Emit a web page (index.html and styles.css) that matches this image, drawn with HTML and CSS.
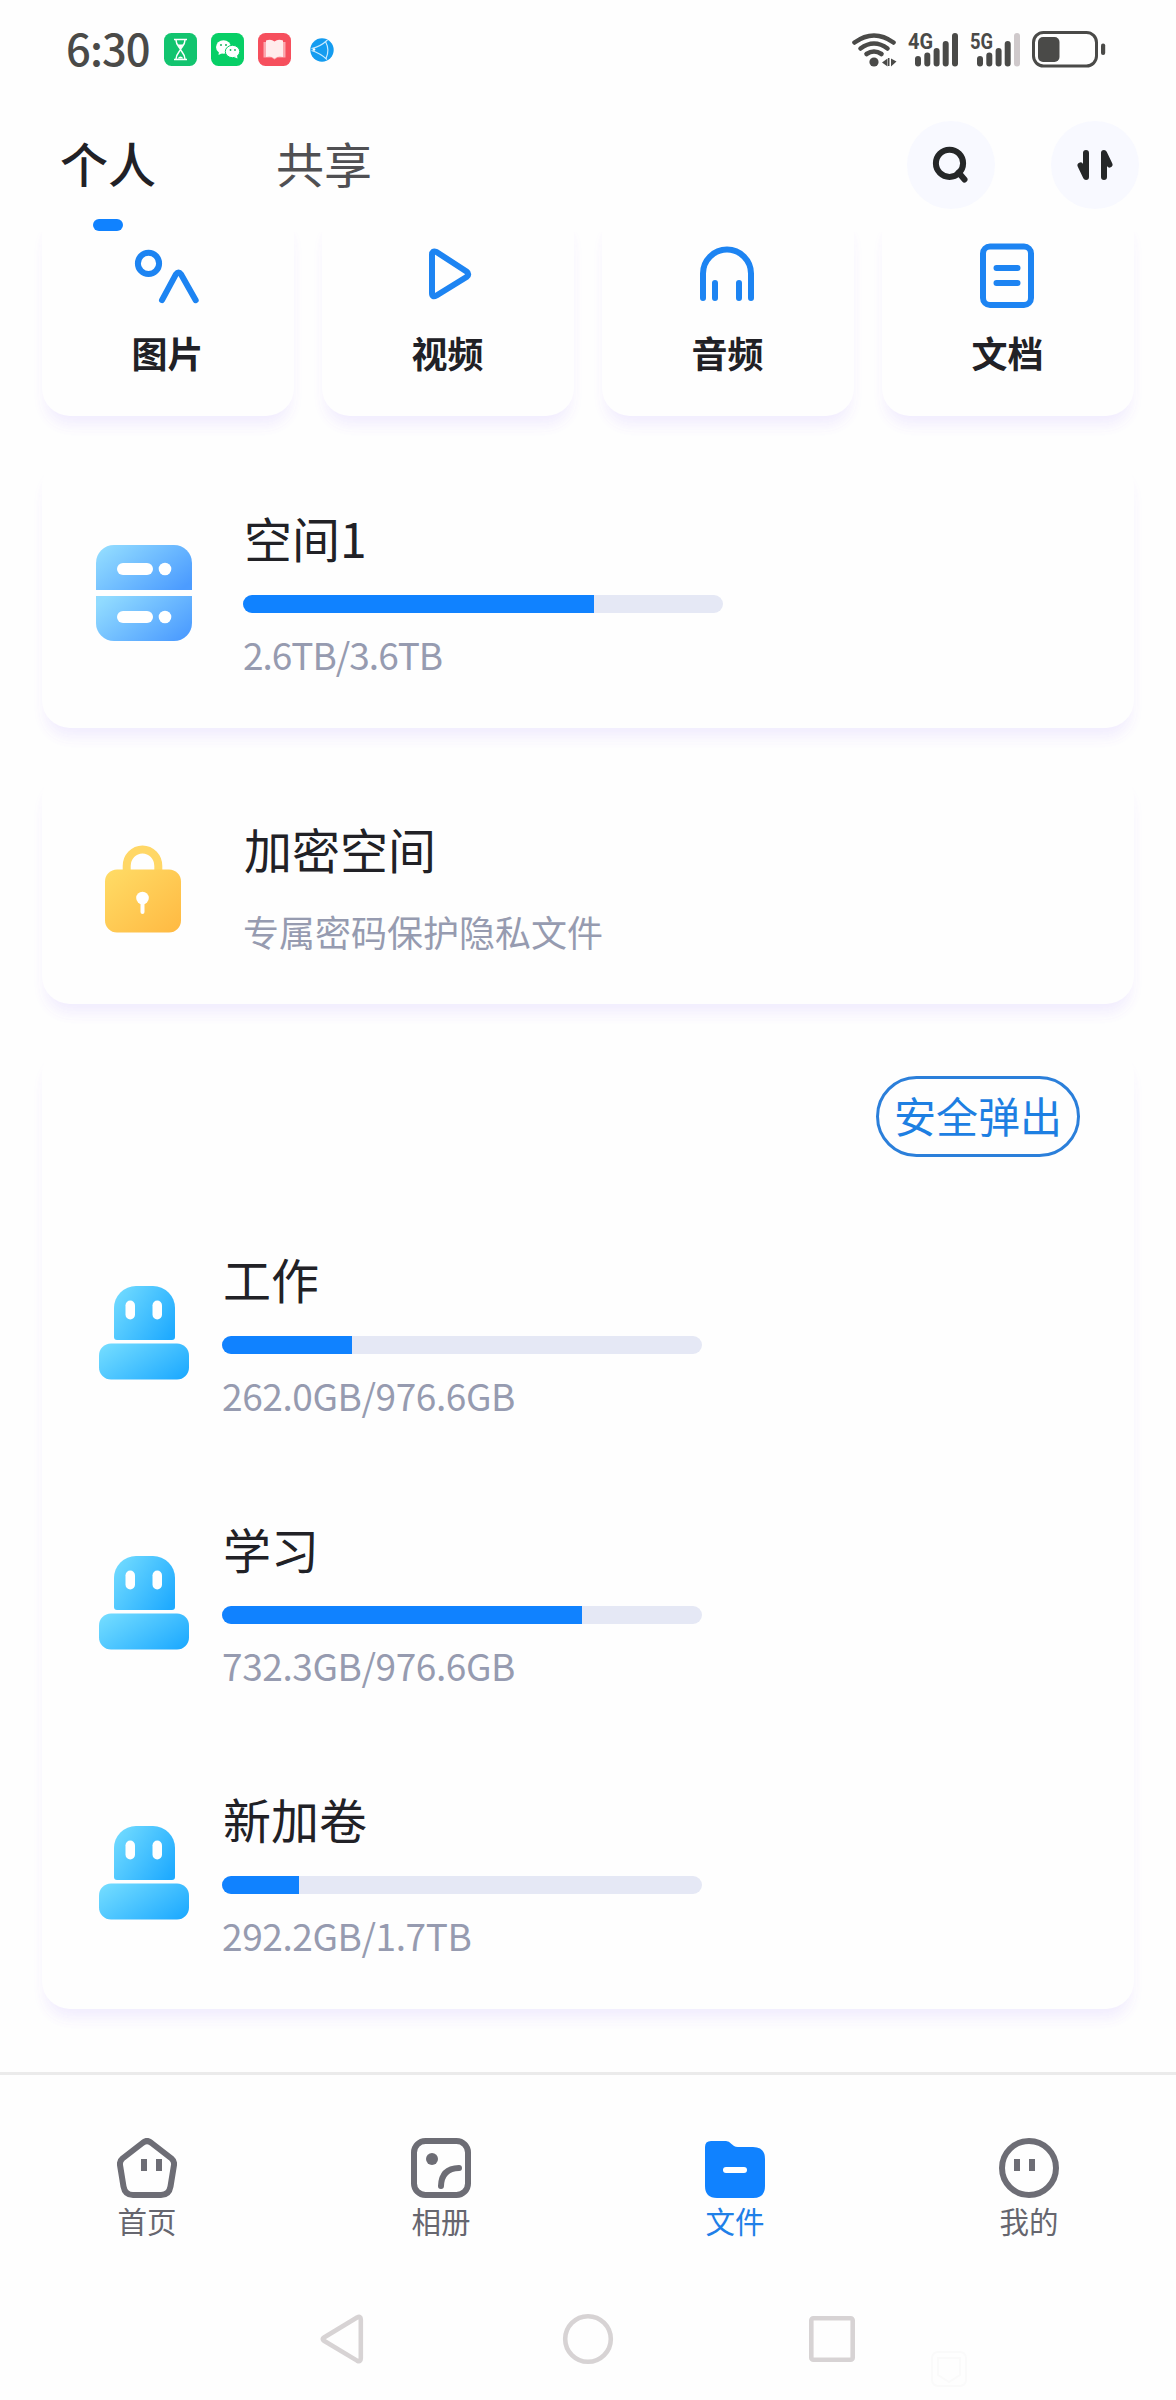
FILE: index.html
```html
<!DOCTYPE html>
<html lang="zh-CN">
<head>
<meta charset="utf-8">
<title>文件</title>
<link rel="stylesheet" href="styles.css">
</head>
<body>
<svg class="defs" width="0" height="0" aria-hidden="true">
  <defs>
    <linearGradient id="g-server" x1="0" y1="0.2" x2="1" y2="0.8">
      <stop offset="0" stop-color="#91dbff"/><stop offset="1" stop-color="#4c9cff"/>
    </linearGradient>
    <linearGradient id="g-lock" x1="0" y1="0" x2="1" y2="1">
      <stop offset="0" stop-color="#ffdc66"/><stop offset="1" stop-color="#ffb942"/>
    </linearGradient>
    <linearGradient id="g-disk" x1="0" y1="0.2" x2="1" y2="0.8">
      <stop offset="0" stop-color="#70daff"/><stop offset="1" stop-color="#20abff"/>
    </linearGradient>
    <symbol id="disk" viewBox="0 0 90 94">
      <path fill="url(#g-disk)" d="M15 51V22A22 22 0 0 1 37 0H54A22 22 0 0 1 76 22V51Q76 54 73 54H18Q15 54 15 51Z"/>
      <rect fill="url(#g-disk)" y="57.500" width="90" height="36" rx="12"/>
      <rect fill="#fff" x="26.500" y="14.500" width="9.500" height="19" rx="4.750"/>
      <rect fill="#fff" x="53.500" y="14.500" width="9.500" height="19" rx="4.750"/>
    </symbol>
  </defs>
</svg>
<div class="screen">
  <header class="status">
    <div class="status-left">
      <span class="clock">6:30</span>
      <svg width="33" height="33" viewBox="0 0 33 33"><rect width="33" height="33" rx="7.500" fill="#12c46f"/><path d="M10 6.500h13M10 26.500h13M12 7c0 5 3.500 7 4.500 9.500C15.500 19 12 21 12 26M21 7c0 5-3.500 7-4.500 9.500C17.500 19 21 21 21 26" fill="none" stroke="#fff" stroke-width="1.500"/><path d="M13.500 11.500h6l-3 4zM13.500 25.500q3-4 6 0z" fill="#fff"/></svg>
      <svg width="33" height="33" viewBox="0 0 33 33"><rect width="33" height="33" rx="7.500" fill="#07cf66"/><path d="M8 18l-.5 4 4-2z" fill="#fff"/><ellipse cx="12.500" cy="14" rx="7.500" ry="6.700" fill="#fff"/><ellipse cx="21.500" cy="18.500" rx="7.200" ry="6.200" fill="#fff" stroke="#07cf66"/><path d="M23 24l3.500 1.500-.5-3z" fill="#fff"/><g fill="#14b55c"><circle cx="10" cy="12" r="1"/><circle cx="15" cy="12" r="1"/><circle cx="19.500" cy="17" r=".9"/><circle cx="24" cy="17" r=".9"/></g></svg>
      <svg width="33" height="33" viewBox="0 0 33 33"><rect width="33" height="33" rx="7.500" fill="#f64f5d"/><path d="M5.500 9v15.500h8l3 2 3-2h8V9z" fill="#fca8ae"/><path d="M8 7.500q5-2 8.500 1 3.500-3 8.500-1v16.500q-5-1.500-8.500 1.500Q13 22.500 8 24z" fill="#ffecec"/></svg>
      <svg class="globe" width="24" height="24" viewBox="0 0 24 24"><circle cx="12" cy="12" r="11.700" fill="#149cf0"/><path d="M1.500 10.500Q10 9 17.500 2M1.500 12.500Q10 15 17 21.500M15.500 3.500Q20 12 16 20.500" fill="none" stroke="#c8eaff" stroke-width="1.200"/><circle cx="4" cy="11.500" r="1.300" fill="#fff"/></svg>
    </div>
    <svg class="status-right" width="256" height="42" viewBox="850 28 256 42">
      <g fill="none" stroke="#4a4a48" stroke-width="4.600" stroke-linecap="round"><path d="M854.500 42.500Q874 28.500 893.500 42.500"/><path d="M860.500 48.500Q874 38.500 887.500 48.500"/><path d="M866.500 54Q874 49 881.500 54"/></g>
      <g fill="#4a4a48"><circle cx="874" cy="62" r="4.600"/><path d="M882 62.500l5.500-4v8zM891 58.500l5.500 3-5.500 5z"/><path d="M888 58h1.500v8H888z"/></g>
      <g class="net"><text x="908" y="49" textLength="25" lengthAdjust="spacingAndGlyphs">4G</text><text x="970" y="49" textLength="23" lengthAdjust="spacingAndGlyphs">5G</text></g>
      <g stroke="#4a4a48" stroke-width="6" stroke-linecap="round">
        <path d="M918 59v4.500M927.300 55.500v8M936.600 51v12.500M945.700 44v19.500M955 36v27.500M980 59v4.500M989.300 55.500v8M998.600 51v12.500M1007.700 44v19.500"/>
        <path stroke="#cfc9cb" d="M1017 36v27.500"/>
      </g>
      <rect x="1033.500" y="32.500" width="63" height="33.500" rx="10" fill="none" stroke="#4a4a48" stroke-width="3"/>
      <rect x="1038" y="37" width="21.500" height="25" rx="5" fill="#4a4a48"/><rect x="1101" y="43.500" width="4.200" height="11.500" rx="2" fill="#4a4a48"/>
    </svg>
  </header>

  <nav class="tabs">
    <a class="tab active">个人</a>
    <a class="tab">共享</a>
    <span class="round"><svg width="88" height="88" viewBox="907 121 88 88"><circle cx="949.500" cy="163.300" r="13.600" fill="none" stroke="#252728" stroke-width="6"/><path d="M958.500 172.500l6 7" stroke="#252728" stroke-width="6" stroke-linecap="round"/></svg></span>
    <span class="round"><svg width="88" height="88" viewBox="1051 121 88 88"><path d="M1086 153v24l-5.500-11.500M1104 177v-24l5.500 11.500" fill="none" stroke="#252728" stroke-width="6" stroke-linecap="round" stroke-linejoin="round"/></svg></span>
  </nav>

  <main class="content">
    <section class="cats">
      <div class="card cat">
        <svg width="72" height="72" viewBox="132 240 72 72"><circle cx="148.500" cy="263.400" r="10.600"/><path d="M162 300.200l14-26q2.500-3.500 5 0l14.700 26"/></svg>
        <span>图片</span>
      </div>
      <div class="card cat">
        <svg width="72" height="72" viewBox="412 240 72 72"><path d="M432 255v38q0 5 4.500 2.500l30-18.500q3.500-3 0-5.500l-30-19.500q-4.500-2-4.500 3z"/></svg>
        <span>视频</span>
      </div>
      <div class="card cat">
        <svg width="72" height="72" viewBox="692 240 72 72"><path d="M703 298v-24.500a24 24 0 0 1 48 0V298M715 283v15M739 283v15"/></svg>
        <span>音频</span>
      </div>
      <div class="card cat">
        <svg width="72" height="72" viewBox="972 240 72 72"><rect x="983" y="246.500" width="48" height="58.500" rx="7"/><path d="M996.500 268h21M996.500 283h21"/></svg>
        <span>文档</span>
      </div>
    </section>

    <section class="card space">
      <svg width="96" height="96" viewBox="0 0 96 96"><path fill="url(#g-server)" d="M0 45V18A18 18 0 0 1 18 0H78A18 18 0 0 1 96 18V45Z"/><path fill="url(#g-server)" d="M0 51H96V78A18 18 0 0 1 78 96H18A18 18 0 0 1 0 78Z"/><g fill="#fff"><rect x="21" y="18" width="36" height="12" rx="6"/><circle cx="69" cy="24" r="6.300"/><rect x="21" y="66" width="36" height="12" rx="6"/><circle cx="69" cy="72" r="6.300"/></g></svg>
      <div class="info">
        <h2>空间1</h2>
        <div class="bar"><i style="width:73.1%"></i></div>
        <p class="size tight">2.6TB/3.6TB</p>
      </div>
    </section>

    <section class="card vault">
      <svg width="96" height="96" viewBox="96 841 96 96"><path d="M126.700 875v-9a15.800 16.500 0 0 1 31.600 0v9" fill="none" stroke="#ffd766" stroke-width="8"/><rect x="105" y="869.500" width="76" height="63" rx="12" fill="url(#g-lock)"/><circle cx="142.500" cy="898" r="6.300" fill="#fff"/><path d="M142.500 900v12" stroke="#fff" stroke-width="4" stroke-linecap="round"/></svg>
      <div class="info">
        <h2>加密空间</h2>
        <p class="desc">专属密码保护隐私文件</p>
      </div>
    </section>

    <section class="card disks">
      <button class="eject">安全弹出</button>
      <div class="disk">
        <svg width="90" height="94"><use href="#disk"/></svg>
        <div class="info"><h2>工作</h2><div class="bar"><i style="width:27%"></i></div><p class="size">262.0GB/976.6GB</p></div>
      </div>
      <div class="disk">
        <svg width="90" height="94"><use href="#disk"/></svg>
        <div class="info"><h2>学习</h2><div class="bar"><i style="width:75%"></i></div><p class="size">732.3GB/976.6GB</p></div>
      </div>
      <div class="disk">
        <svg width="90" height="94"><use href="#disk"/></svg>
        <div class="info"><h2>新加卷</h2><div class="bar"><i style="width:16%"></i></div><p class="size">292.2GB/1.7TB</p></div>
      </div>
    </section>
  </main>

  <nav class="dock">
    <a><svg width="60" height="60" viewBox="0 0 60 60"><path d="M25.500 5Q30 1 34.500 5L54.500 20.500Q57.500 23 57 27L53.500 48.500Q52 57 44 57H16Q8 57 6.500 48.500L3 27Q2.500 23 5.500 20.500Z" class="line"/><path d="M24 21h6v12h-6zM39 21h6v12h-6z" fill="#6d6d75"/></svg>首页</a>
    <a><svg width="60" height="60" viewBox="0 0 60 60"><rect x="3" y="3" width="54" height="54" rx="11.500" class="line"/><circle cx="21" cy="21" r="6" fill="#6d6d75"/><path d="M30 48Q30.500 30.500 48 30" class="line"/></svg>相册</a>
    <a class="on"><svg width="60" height="60" viewBox="0 0 60 60"><path d="M0 9Q0 3 6 3H21Q24 3 26.500 6L29 8Q30.500 9 33 9H48Q60 9 60 21V48Q60 60 48 60H12Q0 60 0 48Z" fill="#1082ff"/><rect x="18" y="29" width="24" height="6" rx="3" fill="#fff"/></svg>文件</a>
    <a><svg width="60" height="60" viewBox="0 0 60 60"><circle cx="30" cy="30" r="27" class="line"/><path d="M15 21h6v12h-6zM30 21h6v12h-6z" fill="#6d6d75"/></svg>我的</a>
  </nav>

  <footer class="sysnav">
    <svg width="44" height="52" viewBox="0 0 44 52"><path d="M37 4.500L4 24.500Q1.500 26 4 27.800L37 47.600Q40.800 49.500 40.800 45.500V6.500Q40.800 2.500 37 4.500Z"/></svg>
    <svg width="52" height="52" viewBox="0 0 52 52"><circle cx="26" cy="26" r="22.800"/></svg>
    <svg width="46" height="46" viewBox="0 0 46 46"><rect x="2.300" y="2.300" width="41.400" height="41.400" rx="2"/></svg>
    <svg class="mark" width="36" height="36" viewBox="0 0 36 36"><rect x="1" y="1" width="34" height="34" rx="6"/><path d="M7 7h22v17l-11 7-11-7z"/></svg>
  </footer>
</div>
</body>
</html>
```
FILE: styles.css
```css
* { box-sizing: border-box; margin: 0; padding: 0; }
body {
  background: #fefefe;
  font-family: "Noto Sans CJK SC", "Noto Sans", sans-serif;
  color: #212126;
}
.defs { display: block; height: 0; }
svg { display: block; flex: none; }
.screen { width: 1176px; height: 2400px; overflow: hidden; display: flex; flex-direction: column; }

.status { height: 98px; display: flex; justify-content: space-between; padding: 0 70px 0 66px; }
.status-left { display: flex; align-items: center; gap: 14px; height: 99px; }
.clock { width: 84px; font-size: 43.5px; font-weight: 500; letter-spacing: -.9px; color: #4a4a48; line-height: 60px; padding-bottom: 4px; }
.globe { margin-left: 5px; }
.status-right { margin-top: 28px; }
.net text { font: 700 22.500px "Roboto", sans-serif; fill: #4a4a48; }

.tabs { height: 134px; display: flex; padding: 23px 37px 0 60px; align-items: flex-start; }
.tab { font-size: 48px; line-height: 82px; color: #505053; position: relative; margin-right: auto; }
.tab.active { font-weight: 500; color: #212126; margin-right: 120px; }
.tab.active::after {
  content: ""; position: absolute; left: 33px; top: 98px;
  width: 30px; height: 12px; border-radius: 6px; background: #1082ff;
}
.round { width: 88px; height: 88px; border-radius: 50%; background: #f8f9ff; }
.round + .round { margin-left: 56px; }

.content { height: 1840px; overflow: hidden; padding: 0 42px; display: flex; flex-direction: column; gap: 42px; flex: none; }
.card {
  background: #fefefe; border-radius: 28px;
  box-shadow: 0 13px 14px -5px rgba(110, 95, 255, .075), 0 12px 14px rgba(200, 100, 255, .03);
}
.cats { display: grid; grid-template-columns: repeat(4, 1fr); gap: 28px; margin-top: -24px; }
.cat { height: 208px; padding-top: 32px; display: flex; flex-direction: column; align-items: center; }
.cat svg { fill: none; stroke: #1d84f2; stroke-width: 6; stroke-linecap: round; stroke-linejoin: round; }
.cat span { font-size: 36px; font-weight: 700; line-height: 54px; margin: 13px 1px 0 0; }

.info { display: flex; flex-direction: column; align-items: flex-start; }
h2 { font-size: 48px; font-weight: 400; line-height: 72px; padding-left: 1px; }
.bar { width: 480px; height: 18px; border-radius: 9px; background: #e5e8f5; overflow: hidden; margin-top: 22px; }
.bar i { display: block; height: 100%; background: #1082ff; }
.size { font-size: 37px; letter-spacing: -.4px; line-height: 54px; color: #969bb0; margin-top: 14px; }
.size.tight { letter-spacing: -1px; }
.desc { font-size: 36px; line-height: 54px; color: #969bb0; margin-top: 20px; }

.space { height: 270px; display: flex; padding: 0 54px; }
.space svg { margin-top: 87px; }
.space .info { margin: 43px 0 0 51px; }
.vault { height: 234px; display: flex; padding: 0 54px; }
.vault svg { margin-top: 71px; }
.vault .info { margin: 42px 0 0 51px; }

.disks { height: 963px; display: flex; flex-direction: column; flex: none; }
.eject {
  align-self: flex-end; margin: 30px 54px 42px 0; width: 204px; height: 81px; flex: none;
  border: 3px solid #2b7fda; border-radius: 41px; background: none;
  font: 400 42px/72px "Noto Sans CJK SC", sans-serif; padding-bottom: 3px; color: #1d7fe2; white-space: nowrap;
}
.disk { height: 270px; display: flex; padding-left: 57px; flex: none; }
.disk svg { margin-top: 87px; }
.disk .info { margin: 43px 0 0 33px; }

.dock { height: 207px; border-top: 3px solid #ebebeb; display: grid; grid-template-columns: repeat(4, 1fr); padding-top: 63px; flex: none; }
.dock a { display: flex; flex-direction: column; align-items: center; font-size: 29.5px; line-height: 42px; gap: 1px; color: #66666f; }
.dock .on { color: #1f80e8; }
.line { fill: none; stroke: #6d6d75; stroke-width: 6; stroke-linecap: round; stroke-linejoin: round; }

.sysnav { height: 121px; display: flex; align-items: center; padding: 0 0 2px 320px; }
.sysnav svg { fill: none; stroke: #d7d3d4; stroke-width: 4.600px; }
.sysnav svg:nth-child(2) { margin-left: 198px; }
.sysnav svg:nth-child(3) { margin-left: 195px; }
.sysnav .mark { margin: 60px 0 0 76px; stroke: #fafafa; stroke-width: 2px; }
```
